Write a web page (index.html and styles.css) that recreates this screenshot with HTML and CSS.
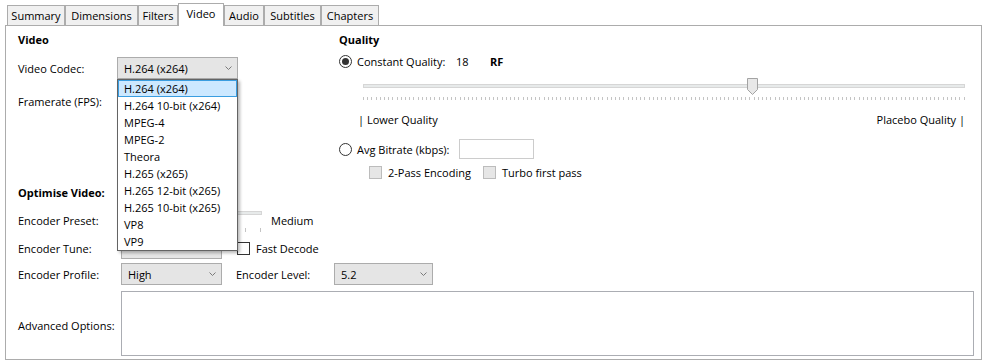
FILE: index.html
```html
<!DOCTYPE html>
<html lang="en">
<head>
<meta charset="utf-8">
<title>Video</title>
<link rel="stylesheet" href="styles.css">
</head>
<body>
<div class="window">
  <div class="tabs">
    <div class="tab tab-summary">Summary</div>
    <div class="tab tab-dimensions">Dimensions</div>
    <div class="tab tab-filters">Filters</div>
    <div class="tab tab-video active">Video</div>
    <div class="tab tab-audio">Audio</div>
    <div class="tab tab-subtitles">Subtitles</div>
    <div class="tab tab-chapters">Chapters</div>
  </div>
  <div class="panel">
    <div class="top">
      <section class="video-col">
        <h2 class="heading">Video</h2>
        <div class="field codec-field">
          <span class="label codec-label">Video Codec:</span>
          <div class="combo combo-codec">
            <span class="combo-text">H.264 (x264)</span>
            <svg class="chev" width="7" height="4" viewBox="0 0 7 4"><path d="M0.5 0.5 L3.5 3.5 L6.5 0.5" fill="none" stroke="#7a7a7a" stroke-width="1"/></svg>
            <ul class="dropdown">
              <li class="selected">H.264 (x264)</li>
              <li>H.264 10-bit (x264)</li>
              <li>MPEG-4</li>
              <li>MPEG-2</li>
              <li>Theora</li>
              <li>H.265 (x265)</li>
              <li>H.265 12-bit (x265)</li>
              <li>H.265 10-bit (x265)</li>
              <li>VP8</li>
              <li>VP9</li>
            </ul>
          </div>
        </div>
        <div class="field fps-field">
          <span class="label">Framerate (FPS):</span>
        </div>
      </section>
      <section class="quality-col">
        <h2 class="heading">Quality</h2>
        <div class="option cq">
          <span class="radio checked"></span>
          <span class="opt-label cq-label">Constant Quality:</span>
          <span class="cq-value">18</span>
          <b class="rf">RF</b>
        </div>
        <div class="slider">
          <div class="track"></div>
          <div class="ticks"></div>
          <svg class="thumb" style="left:64.7%" width="11" height="17" viewBox="0 0 11 17"><polygon points="0.5,0.5 10.5,0.5 10.5,11.5 5.5,16.5 0.5,11.5" fill="#e8e8e8" stroke="#a3a3a3"/></svg>
        </div>
        <div class="scale">
          <span>| Lower Quality</span>
          <span>Placebo Quality |</span>
        </div>
        <div class="option bitrate">
          <span class="radio"></span>
          <span class="opt-label br-label">Avg Bitrate (kbps):</span>
          <span class="textbox"></span>
        </div>
        <div class="checks">
          <span class="check disabled first"><span class="box"></span>2-Pass Encoding</span>
          <span class="check disabled"><span class="box"></span>Turbo first pass</span>
        </div>
      </section>
    </div>
    <section class="optimise">
      <h2 class="heading">Optimise Video:</h2>
      <div class="row row-preset">
        <span class="label">Encoder Preset:</span>
        <div class="preset-slider">
          <div class="track"></div>
          <div class="preset-ticks"></div>
        </div>
        <span class="preset-value">Medium</span>
      </div>
      <div class="row row-tune">
        <span class="label">Encoder Tune:</span>
        <div class="combo combo-small">
          <span class="combo-text"></span>
          <svg class="chev" width="7" height="4" viewBox="0 0 7 4"><path d="M0.5 0.5 L3.5 3.5 L6.5 0.5" fill="none" stroke="#7a7a7a" stroke-width="1"/></svg>
        </div>
        <span class="check tune-check"><span class="box"></span>Fast Decode</span>
      </div>
      <div class="row row-profile">
        <span class="label">Encoder Profile:</span>
        <div class="combo combo-small">
          <span class="combo-text">High</span>
          <svg class="chev" width="7" height="4" viewBox="0 0 7 4"><path d="M0.5 0.5 L3.5 3.5 L6.5 0.5" fill="none" stroke="#7a7a7a" stroke-width="1"/></svg>
        </div>
        <span class="level-label">Encoder Level:</span>
        <div class="combo combo-level">
          <span class="combo-text">5.2</span>
          <svg class="chev" width="7" height="4" viewBox="0 0 7 4"><path d="M0.5 0.5 L3.5 3.5 L6.5 0.5" fill="none" stroke="#7a7a7a" stroke-width="1"/></svg>
        </div>
      </div>
      <div class="row row-adv">
        <span class="label adv-label">Advanced Options:</span>
        <textarea class="advanced"></textarea>
      </div>
    </section>
  </div>
</div>
</body>
</html>
```

FILE: styles.css
```css
* { box-sizing: border-box; }

html, body {
  margin: 0;
  background: #ffffff;
}

body {
  font-family: "Open Sans", "Segoe UI", sans-serif;
  font-size: 11px;
  line-height: 15px;
  color: #000000;
}

.window {
  width: 989px;
  height: 363px;
  overflow: hidden;
}

/* ---------- tabs ---------- */
.tabs {
  display: flex;
  align-items: flex-end;
  height: 25px;
  padding-left: 7px;
}

.tab {
  height: 20px;
  padding: 0;
  border: 1px solid #acacac;
  border-bottom: none;
  background: #f0f0f0;
  line-height: 19px;
  text-align: center;
  white-space: nowrap;
}

.tab-summary { width: 58px; }
.tab-dimensions { width: 73px; }
.tab-filters { width: 40px; }
.tab-video { width: 46px; }
.tab-audio { width: 40px; }
.tab-subtitles { width: 57px; }
.tab-chapters { width: 58px; }

.tab.active {
  position: relative;
  z-index: 2;
  height: 23px;
  margin-bottom: -1px;
  line-height: 20px;
  background: #ffffff;
}

/* ---------- panel ---------- */
.panel {
  margin-left: 5px;
  width: 977px;
  height: 335px;
  border: 1px solid #acacac;
  background: #ffffff;
  padding: 6px 6px 3px 12px;
}

.heading {
  margin: 0;
  font-size: 11px;
  font-weight: 700;
  line-height: 15px;
}

.label { flex: none; }

.top {
  display: grid;
  grid-template-columns: 321px 1fr;
}

.field {
  display: flex;
  align-items: center;
  height: 22px;
}

.codec-field { margin-top: 10px; }
.codec-label { width: 99px; }
.fps-field { margin-top: 11px; }

/* ---------- combo ---------- */
.combo {
  position: relative;
  display: flex;
  align-items: center;
  justify-content: space-between;
  height: 22px;
  border: 1px solid #acacac;
  background: #e5e5e5;
  padding: 0 5px 0 6px;
  flex: none;
}

.combo-codec { width: 121px; }
.combo-small { width: 101px; }
.combo-level { width: 99px; }

.chev { flex: none; display: block; }

.dropdown {
  position: absolute;
  top: 21px;
  left: -1px;
  width: 121px;
  height: 172px;
  margin: 0;
  padding: 0;
  list-style: none;
  background: #ffffff;
  border: 1px solid #646464;
  box-shadow: 2px 2px 3px rgba(0, 0, 0, 0.28);
  z-index: 5;
}

.dropdown li {
  height: 17px;
  line-height: 17px;
  padding-left: 6px;
  white-space: nowrap;
}

.dropdown li.selected {
  background: #cce8ff;
  box-shadow: inset 0 0 0 1px #3a9de0;
}

/* ---------- quality ---------- */
.option {
  display: flex;
  align-items: center;
}

.cq {
  margin-top: 7px;
  height: 15px;
}

.radio {
  flex: none;
  width: 13px;
  height: 13px;
  border: 1px solid #333333;
  border-radius: 50%;
  background: #ffffff;
  display: flex;
  align-items: center;
  justify-content: center;
}

.radio.checked::after {
  content: "";
  width: 7px;
  height: 7px;
  border-radius: 50%;
  background: #333333;
}

.opt-label { margin-left: 5px; flex: none; }
.cq-label { width: 99px; }
.cq-value { width: 34px; }
.rf { font-weight: 700; }

.slider {
  position: relative;
  margin: 9px 10px 0 24px;
  padding-top: 6px;
}

.track {
  height: 4px;
  background: #e7eaea;
  border: 1px solid #d6d6d6;
}

.ticks {
  height: 3px;
  margin-top: 9px;
  background: repeating-linear-gradient(to right, #c4c4c4 0 1px, transparent 1px 4.2px);
}

.thumb {
  position: absolute;
  top: 0;
  margin-left: -5px;
  display: block;
}

.scale {
  display: flex;
  justify-content: space-between;
  margin: 12px 10px 0 19px;
}

.bitrate {
  margin-top: 12px;
  height: 20px;
}

.br-label { width: 102px; }

.textbox {
  width: 75px;
  height: 20px;
  border: 1px solid #cccccc;
  background: #ffffff;
}

.checks {
  display: flex;
  align-items: center;
  height: 15px;
  margin-top: 6px;
  margin-left: 30px;
}

.check {
  display: flex;
  align-items: center;
  gap: 6px;
  white-space: nowrap;
}

.check.first { width: 114px; }

.box {
  flex: none;
  width: 13px;
  height: 13px;
  border: 1px solid #333333;
  background: #ffffff;
}

.check.disabled .box {
  background: #e6e6e6;
  border-color: #bcbcbc;
}

/* ---------- optimise ---------- */
.optimise { margin-top: 5px; }

.row {
  display: flex;
  align-items: center;
}

.row .label { width: 103px; }

.row-preset { height: 30px; margin-top: 5px; }

.preset-slider {
  width: 141px;
  align-self: flex-start;
  padding-top: 6px;
}

.preset-ticks {
  height: 4px;
  margin-top: 13px;
  margin-right: 1px;
  background: repeating-linear-gradient(to left, #c4c4c4 0 1px, transparent 1px 15px);
}

.preset-value { margin-left: 9px; }

.row-tune { height: 22px; margin-top: 2px; }
.tune-check { margin-left: 15px; }

.row-profile { height: 22px; margin-top: 4px; }
.level-label { width: 98px; margin-left: 14px; flex: none; }

.row-adv { height: 65px; margin-top: 6px; }
.adv-label { padding-top: 3px; }

.advanced {
  width: 853px;
  height: 65px;
  margin: 0;
  padding: 0;
  border: 1px solid #abadb3;
  background: #ffffff;
  resize: none;
  font: inherit;
}
```
